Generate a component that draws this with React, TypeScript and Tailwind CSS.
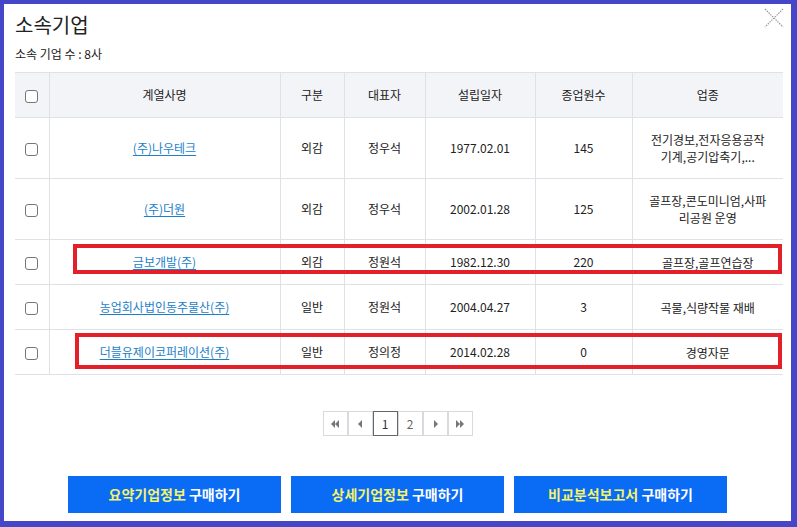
import React from 'react';

interface Company {
  name: string;
  type: string;
  ceo: string;
  founded: string;
  employees: string;
  industry: string[];
  tall?: boolean;
}

const companies: Company[] = [
  { name: '(주)나우테크', type: '외감', ceo: '정우석', founded: '1977.02.01', employees: '145', industry: ['전기경보,전자응용공작', '기계,공기압축기,...'], tall: true },
  { name: '(주)더원', type: '외감', ceo: '정우석', founded: '2002.01.28', employees: '125', industry: ['골프장,콘도미니엄,사파', '리공원 운영'], tall: true },
  { name: '금보개발(주)', type: '외감', ceo: '정원석', founded: '1982.12.30', employees: '220', industry: ['골프장,골프연습장'] },
  { name: '농업회사법인동주물산(주)', type: '일반', ceo: '정원석', founded: '2004.04.27', employees: '3', industry: ['곡물,식량작물 재배'] },
  { name: '더블유제이코퍼레이션(주)', type: '일반', ceo: '정의정', founded: '2014.02.28', employees: '0', industry: ['경영자문'] },
];

const font = { fontFamily: '"Noto Sans CJK KR", "Noto Sans", sans-serif' };

function Checkbox() {
  return <span className="inline-block w-[13px] h-[13px] rounded-[3px] border border-[#767676] bg-white align-middle" />;
}

function PageBtn({ children, active }: { children: React.ReactNode; active?: boolean }) {
  return (
    <span
      className={`w-[25px] h-[25px] flex items-center justify-center text-[12px] ${
        active ? 'border border-[#666] bg-white text-[#333] relative z-10' : 'border border-[#d8dae0] text-[#666]'
      }`}
    >
      {children}
    </span>
  );
}

export default function App() {
  return (
    <div className="relative w-[797px] h-[527px] bg-[#4646c8] pt-[4px] pl-[4px] pr-[6px] pb-[6px]" style={font}>
      <div className="relative w-full h-full bg-white px-[11px] pt-[8px]">
        {/* close */}
        <svg className="absolute right-[7px] top-[4px]" width="20" height="20" viewBox="0 0 20 20">
          <path d="M1 1 L19 19 M19 1 L1 19" stroke="#999" strokeWidth="1.2" strokeDasharray="1.5 1" />
        </svg>

        <h1 className="text-[20px] leading-[26px] text-[#222]">소속기업</h1>
        <p className="text-[12px] leading-[16px] text-[#222] mt-[8px]">소속 기업 수 : 8사</p>

        <table className="mt-[10px] w-[768px] border-collapse text-[12px] text-[#222]">
          <thead>
            <tr className="h-[45px] bg-[#f3f4f8]">
              <th className="w-[34px] border-y border-[#dfe1e7] font-normal"><Checkbox /></th>
              <th className="w-[231px] border border-[#dfe1e7] font-normal">계열사명</th>
              <th className="w-[64px] border border-[#dfe1e7] font-normal">구분</th>
              <th className="w-[81px] border border-[#dfe1e7] font-normal">대표자</th>
              <th className="w-[110px] border border-[#dfe1e7] font-normal">설립일자</th>
              <th className="w-[97px] border border-[#dfe1e7] font-normal">종업원수</th>
              <th className="border-y border-l border-[#dfe1e7] font-normal">업종</th>
            </tr>
          </thead>
          <tbody>
            {companies.map((c) => (
              <tr key={c.name} className={c.tall ? 'h-[61px]' : 'h-[45px]'}>
                <td className="border-y border-[#dfe1e7] text-center"><Checkbox /></td>
                <td className="border border-[#dfe1e7] text-center">
                  <a className="text-[#1d7fc9] underline underline-offset-2 cursor-pointer">{c.name}</a>
                </td>
                <td className="border border-[#dfe1e7] text-center">{c.type}</td>
                <td className="border border-[#dfe1e7] text-center">{c.ceo}</td>
                <td className="border border-[#dfe1e7] text-center">{c.founded}</td>
                <td className="border border-[#dfe1e7] text-center">{c.employees}</td>
                <td className="border-y border-l border-[#dfe1e7] text-center leading-[17px]">
                  {c.industry.map((l) => (
                    <div key={l}>{l}</div>
                  ))}
                </td>
              </tr>
            ))}
          </tbody>
        </table>

        {/* pagination */}
        <div className="flex justify-center mt-[36px]">
          <div className="flex">
            <PageBtn>
              <svg width="10" height="8" viewBox="0 0 10 8"><path d="M5 0 L1 4 L5 8 Z M9 0 L5 4 L9 8 Z" fill="#777" /></svg>
            </PageBtn>
            <PageBtn>
              <svg width="5" height="8" viewBox="0 0 5 8"><path d="M4 0 L0 4 L4 8 Z" fill="#777" /></svg>
            </PageBtn>
            <PageBtn active>1</PageBtn>
            <PageBtn>2</PageBtn>
            <PageBtn>
              <svg width="5" height="8" viewBox="0 0 5 8"><path d="M1 0 L5 4 L1 8 Z" fill="#777" /></svg>
            </PageBtn>
            <PageBtn>
              <svg width="10" height="8" viewBox="0 0 10 8"><path d="M1 0 L5 4 L1 8 Z M5 0 L9 4 L5 8 Z" fill="#777" /></svg>
            </PageBtn>
          </div>
        </div>

        {/* buttons */}
        <div className="flex justify-center gap-[10px] mt-[40px]">
          {[
            ['요약기업정보', ' 구매하기'],
            ['상세기업정보', ' 구매하기'],
            ['비교분석보고서', ' 구매하기'],
          ].map(([y, w]) => (
            <button key={y} className="w-[213px] h-[37px] bg-[#0a6bf5] text-[14px] font-bold">
              <span className="text-[#f4f36a]">{y}</span>
              <span className="text-white">{w}</span>
            </button>
          ))}
        </div>
      </div>

      {/* highlight boxes */}
      <div className="absolute left-[73px] top-[244px] w-[709px] h-[30px] border-[4px] border-[#e3202a] pointer-events-none" />
      <div className="absolute left-[75px] top-[333px] w-[707px] h-[36px] border-[4px] border-[#e3202a] pointer-events-none" />
    </div>
  );
}
